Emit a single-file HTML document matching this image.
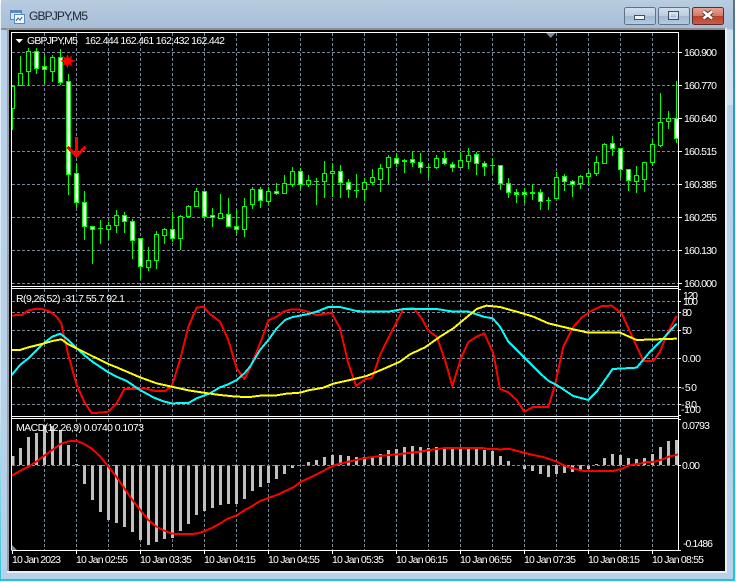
<!DOCTYPE html>
<html><head><meta charset="utf-8"><title>GBPJPY,M5</title>
<style>
html,body{margin:0;padding:0;background:#fff;width:736px;height:582px;overflow:hidden}
svg{display:block}
text{font-family:"Liberation Sans",sans-serif;font-size:10.5px;fill:#fff}
.g{stroke:#778899;stroke-width:1;stroke-dasharray:3 2;fill:none}
.c{shape-rendering:crispEdges}
.l{fill:none;stroke-width:6;stroke-linejoin:round;stroke-linecap:round;shape-rendering:crispEdges}
</style></head><body>
<svg width="736" height="582" viewBox="0 0 736 582" xmlns="http://www.w3.org/2000/svg">
<defs>
<linearGradient id="t" x1="0" y1="0" x2="0" y2="1"><stop offset="0" stop-color="#b9cce0"/><stop offset="1" stop-color="#a5bdd7"/></linearGradient>
<linearGradient id="b" x1="0" y1="0" x2="0" y2="1"><stop offset="0" stop-color="#d3e0ec"/><stop offset=".5" stop-color="#b9cde0"/><stop offset=".5" stop-color="#a1b8d1"/><stop offset="1" stop-color="#b6cce2"/></linearGradient>
<linearGradient id="r" x1="0" y1="0" x2="0" y2="1"><stop offset="0" stop-color="#e5a698"/><stop offset=".5" stop-color="#cf7a68"/><stop offset=".5" stop-color="#b8402c"/><stop offset="1" stop-color="#c8604c"/></linearGradient>
<linearGradient id="e" x1="0" y1="0" x2="0" y2="1"><stop offset="0" stop-color="#5c6f80"/><stop offset=".2" stop-color="#2a9fb4"/><stop offset="1" stop-color="#1fc4dc"/></linearGradient>
<linearGradient id="le" x1="0" y1="0" x2="0" y2="1"><stop offset="0" stop-color="#e8f0f8"/><stop offset=".7" stop-color="#cfe4f0"/><stop offset="1" stop-color="#30c4da"/></linearGradient>
<clipPath id="cp"><rect x="12" y="33" width="666" height="517"/></clipPath>
</defs>
<!-- frame -->
<rect x="0" y="0" width="736" height="582" fill="#fff"/>
<rect x="1" y="0" width="732" height="579" fill="#b7d1eb" class="c"/>
<rect x="1" y="0" width="732" height="29" fill="url(#t)" class="c"/>
<rect x="0" y="3" width="1" height="577" fill="url(#le)" class="c"/>
<rect x="733" y="0" width="2" height="581" fill="url(#e)" class="c"/>
<rect x="0" y="579" width="735" height="2" fill="#1fc4dc" class="c"/>
<rect x="727" y="30" width="6" height="75" fill="#cfe0f0" class="c"/>
<rect x="1" y="28" width="724" height="2" fill="#8c8c8c" class="c"/>
<rect x="7" y="28" width="2" height="545" fill="#9aa0a6" class="c"/>
<rect x="725" y="28" width="2" height="545" fill="#e8f0f8" class="c"/>
<rect x="7" y="571" width="720" height="2" fill="#e8f0f8" class="c"/>
<rect x="9" y="30" width="716" height="541" fill="#000" class="c"/>
<!-- title -->
<g class="c">
<rect x="10.5" y="10.5" width="11" height="9" fill="#dbe8f6" stroke="#5b87c0"/>
<rect x="14.5" y="14.5" width="10" height="9" fill="#f4f8fc" stroke="#5b87c0"/>
<rect x="11" y="11" width="10" height="2" fill="#5b87c0"/>
<path d="M16 21l2-3 2 2 2-3" stroke="#3c6fb4" fill="none"/>
</g>
<text x="29" y="20" style="font-size:12px;fill:#1c2430" textLength="59">GBPJPY,M5</text>
<rect x="624.5" y="7.5" width="31" height="17" rx="2" fill="url(#b)" stroke="#5f7288"/>
<rect x="658.5" y="7.5" width="31" height="17" rx="2" fill="url(#b)" stroke="#5f7288"/>
<rect x="692.5" y="7.5" width="31" height="17" rx="2" fill="url(#r)" stroke="#5e2a2a"/>
<rect x="634.5" y="15.5" width="10" height="4" fill="#f0f4f8" stroke="#44505e" class="c"/>
<rect x="668.5" y="11.5" width="10" height="8" fill="none" stroke="#44505e" stroke-width="1" class="c"/>
<rect x="670" y="13" width="7" height="5" fill="none" stroke="#f0f4f8" stroke-width="1" class="c"/>
<path d="M703.5 11.5l8.5 7M712 11.5l-8.5 7" stroke="#5e3030" stroke-width="4.4" fill="none"/>
<path d="M703.5 11.5l8.5 7M712 11.5l-8.5 7" stroke="#fff" stroke-width="2.6" fill="none"/>
<!-- grid -->
<g class="c">
<path class="g" d="M44.5 33V286M76.5 33V286M108.5 33V286M140.5 33V286M172.5 33V286M204.5 33V286M236.5 33V286M268.5 33V286M300.5 33V286M332.5 33V286M364.5 33V286M396.5 33V286M428.5 33V286M460.5 33V286M492.5 33V286M524.5 33V286M556.5 33V286M588.5 33V286M620.5 33V286M652.5 33V286"/>
<path class="g" d="M12 52.5H678M12 85.5H678M12 118.5H678M12 151.5H678M12 184.5H678M12 217.5H678M12 250.5H678M12 283.5H678"/>
<path class="g" d="M44.5 289V416M76.5 289V416M108.5 289V416M140.5 289V416M172.5 289V416M204.5 289V416M236.5 289V416M268.5 289V416M300.5 289V416M332.5 289V416M364.5 289V416M396.5 289V416M428.5 289V416M460.5 289V416M492.5 289V416M524.5 289V416M556.5 289V416M588.5 289V416M620.5 289V416M652.5 289V416"/>
<path class="g" d="M12 301.5H678M12 312.5H678M12 330.5H678M12 358.5H678M12 387.5H678M12 404.5H678"/>
<path class="g" d="M44.5 419V550M76.5 419V550M108.5 419V550M140.5 419V550M172.5 419V550M204.5 419V550M236.5 419V550M268.5 419V550M300.5 419V550M332.5 419V550M364.5 419V550M396.5 419V550M428.5 419V550M460.5 419V550M492.5 419V550M524.5 419V550M556.5 419V550M588.5 419V550M620.5 419V550M652.5 419V550"/>
<path class="g" d="M12 465.5H678"/>
</g>
<g clip-path="url(#cp)">
<!-- candles -->
<g class="c">
<path fill="none" stroke="#0f0" d="M12.5 86V130M20.5 56V86M28.5 48V86M36.5 48V74M44.5 55V84M52.5 55V82M60.5 49V85M68.5 74V195M76.5 163V208M84.5 191V240M92.5 226V264M100.5 220V244M108.5 222V239M116.5 210V233M124.5 212V233M132.5 219V259M140.5 238V280M148.5 247V271M156.5 231V269M164.5 228V244M172.5 212V242M180.5 215V250M188.5 205V218M196.5 188V207M204.5 191V216M212.5 208V227M220.5 194V218M228.5 198V227M236.5 210V234M244.5 198V237M252.5 187V209M260.5 187V208M268.5 187V205M276.5 183V195M284.5 175V193M292.5 167V187M300.5 168V190M308.5 175V187M316.5 178V205M324.5 161V198M332.5 163V197M340.5 165V198M348.5 179V198M356.5 174V198M364.5 178V201M372.5 169V185M380.5 164V192M388.5 155V184M396.5 153V167M404.5 159V173M412.5 151V167M420.5 153V173M428.5 163V178M436.5 155V169M444.5 151V165M452.5 162V172M460.5 152V167M468.5 148V169M476.5 152V175M484.5 161V176M492.5 158V173M500.5 165V190M508.5 178V198M516.5 189V203M524.5 188V203M532.5 184V200M540.5 189V210M548.5 197V210M556.5 172V199M564.5 174V191M572.5 180V197M580.5 175V189M588.5 170V186M596.5 156V176M604.5 143V164M612.5 136V156M620.5 148V178M628.5 169V191M636.5 166V193M644.5 162V192M652.5 140V166M660.5 93V147M668.5 111V129M676.5 81V143"/>
<path fill="none" stroke="#0f0" d="M98 228.5H103M314 181.5H319M354 190.5H359M402 160.5H407M426 167.5H431M490 165.5H495M530 192.5H535M546 200.5H551"/>
<path fill="#000" stroke="#0f0" d="M10.5 86.5h4v22h-4zM18.5 73.5h4v12h-4zM26.5 51.5h4v20h-4zM50.5 57.5h4v14h-4zM106.5 225.5h4v4h-4zM114.5 215.5h4v10h-4zM146.5 260.5h4v7h-4zM154.5 234.5h4v26h-4zM162.5 229.5h4v6h-4zM178.5 216.5h4v22h-4zM186.5 206.5h4v10h-4zM194.5 191.5h4v15h-4zM218.5 213.5h4v5h-4zM242.5 206.5h4v23h-4zM250.5 189.5h4v15h-4zM266.5 191.5h4v10h-4zM282.5 183.5h4v10h-4zM290.5 171.5h4v13h-4zM306.5 180.5h4v4h-4zM322.5 173.5h4v8h-4zM330.5 171.5h4v2h-4zM362.5 182.5h4v7h-4zM370.5 177.5h4v5h-4zM378.5 168.5h4v11h-4zM386.5 157.5h4v10h-4zM434.5 158.5h4v9h-4zM458.5 160.5h4v7h-4zM466.5 155.5h4v6h-4zM554.5 177.5h4v21h-4zM578.5 176.5h4v7h-4zM586.5 173.5h4v3h-4zM594.5 162.5h4v11h-4zM602.5 144.5h4v19h-4zM634.5 175.5h4v6h-4zM642.5 162.5h4v17h-4zM650.5 144.5h4v18h-4zM658.5 122.5h4v23h-4zM666.5 118.5h4v3h-4z"/>
<path fill="#fff" stroke="#0f0" d="M34.5 51.5h4v17h-4zM42.5 66.5h4v3h-4zM58.5 57.5h4v25h-4zM66.5 81.5h4v93h-4zM74.5 173.5h4v29h-4zM82.5 202.5h4v24h-4zM90.5 226.5h4v3h-4zM122.5 215.5h4v6h-4zM130.5 221.5h4v19h-4zM138.5 238.5h4v28h-4zM170.5 229.5h4v9h-4zM202.5 191.5h4v25h-4zM210.5 215.5h4v2h-4zM226.5 214.5h4v12h-4zM234.5 226.5h4v3h-4zM258.5 189.5h4v11h-4zM274.5 191.5h4v2h-4zM298.5 171.5h4v13h-4zM338.5 171.5h4v11h-4zM346.5 182.5h4v7h-4zM394.5 158.5h4v5h-4zM410.5 159.5h4v3h-4zM418.5 162.5h4v5h-4zM442.5 158.5h4v5h-4zM450.5 164.5h4v3h-4zM474.5 154.5h4v9h-4zM482.5 163.5h4v3h-4zM498.5 165.5h4v18h-4zM506.5 183.5h4v9h-4zM514.5 192.5h4v2h-4zM522.5 192.5h4v2h-4zM538.5 192.5h4v9h-4zM562.5 176.5h4v5h-4zM570.5 181.5h4v3h-4zM610.5 143.5h4v5h-4zM618.5 148.5h4v21h-4zM626.5 169.5h4v11h-4zM674.5 118.5h4v20h-4z"/>
<path fill="none" stroke="#0f0" d="M402 161.5H407M530 193.5H535"/>
</g>
<!-- star & arrow -->
<path fill="#f00" d="M67.5 54l1.5 4 3.5-2.500-1.500 4 4.500 1.500-4.500 1.500 1.500 4-3.500-2.500-1.500 4.500-1.500-4.500-3.500 2.500 1.500-4-4.500-1.500 4.500-1.500-1.500-4 3.500 2.500z" class="c"/>
<path d="M76.500 137V156M67.500 147L76.500 156L85.500 147" stroke="#f00" stroke-width="3" fill="none" class="c"/>
<!-- oscillator -->
<g transform="translate(0,285) scale(.33333)">
<polyline class="l" stroke="#f00" points="37,91 66,90 85,76 110,71 130,73 150,80 170,95 184,115 190,145 205,210 230,300 255,355 275,384 300,383 325,380 350,355 373,312 440,311 465,318 495,318 515,305 540,225 565,125 590,68 610,65 630,87 660,110 685,165 710,250 733,282 750,250 765,213 788,155 805,106 830,95 850,80 870,74 900,74 925,80 950,90 975,86 995,84 1020,130 1045,235 1068,303 1095,283 1117,278 1140,210 1180,130 1210,72 1240,69 1265,100 1285,137 1310,155 1335,225 1357,303 1382,222 1405,171 1430,155 1453,145 1480,205 1500,312 1525,322 1550,345 1573,380 1600,366 1645,366 1665,300 1690,185 1720,125 1745,98 1770,80 1805,63 1835,62 1865,85 1890,140 1930,228 1960,228 1980,200 2000,150 2028,95"/>
<polyline class="l" stroke="#0ff" points="37,268 60,240 85,220 110,195 133,173 157,155 181,146 205,165 230,190 255,212 280,232 325,262 350,275 380,288 420,315 460,337 490,349 515,355 565,354 590,340 630,325 660,307 685,298 710,285 733,265 750,245 780,195 805,165 830,130 855,105 875,97 900,92 925,87 950,80 985,66 1020,66 1070,78 1095,80 1165,80 1210,72 1310,72 1360,80 1405,80 1450,95 1478,100 1500,125 1525,170 1570,215 1620,265 1645,287 1670,300 1720,333 1765,345 1790,320 1838,252 1910,248 1950,200 1990,160 2028,118"/>
<polyline class="l" stroke="#ff0" points="37,195 60,195 85,187 133,175 157,168 184,163 205,178 230,190 280,215 325,237 350,247 420,277 470,295 515,305 565,316 610,323 660,330 710,335 750,336 780,332 830,331 860,326 900,323 925,316 970,308 1000,296 1050,285 1100,273 1150,252 1200,230 1230,208 1275,187 1320,155 1360,130 1390,105 1430,72 1460,62 1500,66 1550,80 1600,95 1645,115 1720,133 1765,143 1860,143 1910,165 2028,161"/>
</g>
<!-- histogram -->
<path fill="none" stroke="#c0c0c0" stroke-width="3" class="c" d="M13 465V456M20.500 465V448M28.500 465V437M36.500 465V433M44.500 465V425M52.500 465V426M60.500 465V430M68.500 465V445M76.500 465V464M84.500 465V484M92.500 465V500M100.500 465V512M108.500 465V520M116.500 465V523M124.500 465V527M132.500 465V532M140.500 465V540M148.500 465V545M156.500 465V542M164.500 465V539M172.500 465V538M180.500 465V531M188.500 465V524M196.500 465V515M204.500 465V511M212.500 465V508M220.500 465V505M228.500 465V504M236.500 465V504M244.500 465V499M252.500 465V491M260.500 465V487M268.500 465V483M276.500 465V479M284.500 465V474M292.500 465V468M308.500 465V462M316.500 465V460M324.500 465V457M332.500 465V455M340.500 465V455M348.500 465V456M356.500 465V457M364.500 465V457M372.500 465V456M380.500 465V454M388.500 465V450M396.500 465V449M404.500 465V447M412.500 465V446M420.500 465V447M428.500 465V448M436.500 465V447M444.500 465V447M452.500 465V447M460.500 465V448M468.500 465V448M476.500 465V449M484.500 465V450M492.500 465V451M500.500 465V456M508.500 465V461M524.500 465V469M532.500 465V471M540.500 465V474M548.500 465V477M556.500 465V474M564.500 465V473M572.500 465V472M580.500 465V470M588.500 465V469M596.500 465V464M604.500 465V458M612.500 465V454M620.500 465V455M628.500 465V458M636.500 465V459M644.500 465V458M652.500 465V454M660.500 465V447M668.500 465V441M676.500 465V440"/>
<path fill="none" stroke="#778899" stroke-dasharray="3 2" d="M12 465.500H678" class="c"/>
<g transform="translate(0,415) scale(.33333)">
<polyline class="l" stroke="#f00" points="37,181 60,168 85,155 109,140 133,122 157,105 181,87 205,79 229,77 253,87 277,102 301,125 325,155 349,185 373,220 397,255 421,285 445,315 469,335 493,347 517,356 541,357 565,357 589,356 613,349 637,338 661,325 685,310 709,302 733,286 750,277 780,258 805,249 835,238 880,217 900,202 950,178 1000,152 1020,146 1090,130 1140,123 1190,118 1260,110 1290,105 1335,99 1450,99 1455,101 1500,103 1530,102 1560,110 1600,120 1630,126 1670,140 1700,155 1750,168 1840,168 1870,160 1890,150 1915,147 1940,141 1965,140 1990,132 2010,124 2035,118 2060,113"/>
</g>
</g>
<!-- panel borders -->
<g class="c" fill="none" stroke="#fff">
<path d="M11.500 550V32.500H678.500V550"/>
<path d="M11.500 286.500H678.500M11.500 288.500H678.500M11.500 416.500H678.500M11.500 418.500H678.500M11.500 550.500H681"/>
<path d="M678 52.500H682M678 85.500H682M678 118.500H682M678 151.500H682M678 184.500H682M678 217.500H682M678 250.500H682M678 283.500H682"/>
<path d="M678 289.500H681M678 301.500H681M678 312.500H681M678 330.500H681M678 358.500H681M678 387.500H681M678 404.500H681M678 415.500H681M678 419.500H681M678 465.500H681"/>
<path d="M12.500 550V554M76.500 550V554M140.500 550V554M204.500 550V554M268.500 550V554M332.500 550V554M396.500 550V554M460.500 550V554M524.500 550V554M588.500 550V554M652.500 550V554"/>
</g>
<path fill="#778899" d="M546 33h9.500l-4.750 5z"/>
<path fill="#fff" d="M15.500 39h7.500l-3.750 4z"/>
<path fill="#778899" d="M12 545v5h5z"/>
<!-- labels -->
<text x="27" y="44" textLength="51">GBPJPY,M5</text>
<text x="85" y="44" textLength="140">162.444 162.461 162.432 162.442</text>
<text x="16" y="302" textLength="109">R(9,26,52) -31.7 55.7 92.1</text>
<text x="16" y="431" textLength="128">MACD(12,26,9) 0.0740 0.1073</text>
<text x="684" y="56" textLength="33">160.900</text>
<text x="684" y="89" textLength="33">160.770</text>
<text x="684" y="122" textLength="33">160.640</text>
<text x="684" y="155" textLength="33">160.515</text>
<text x="684" y="188" textLength="33">160.385</text>
<text x="684" y="221" textLength="33">160.255</text>
<text x="684" y="254" textLength="33">160.130</text>
<text x="684" y="287" textLength="33">160.000</text>
<text x="683" y="299" textLength="15">120</text>
<text x="683" y="305" textLength="15">100</text>
<text x="682" y="316" textLength="10">80</text>
<text x="682" y="334" textLength="10">50</text>
<text x="682" y="362" textLength="19">0.00</text>
<text x="681" y="391" textLength="16">-50</text>
<text x="681" y="408" textLength="16">-80</text>
<text x="681" y="413" textLength="20">-100</text>
<text x="682" y="429" textLength="28">0.0793</text>
<text x="682" y="469" textLength="18">0.00</text>
<text x="683" y="547" textLength="30">-0.1486</text>
<text x="12" y="563" textLength="49">10 Jan 2023</text>
<text x="76" y="563" textLength="52">10 Jan 02:55</text>
<text x="140" y="563" textLength="52">10 Jan 03:35</text>
<text x="204" y="563" textLength="52">10 Jan 04:15</text>
<text x="268" y="563" textLength="52">10 Jan 04:55</text>
<text x="332" y="563" textLength="52">10 Jan 05:35</text>
<text x="396" y="563" textLength="52">10 Jan 06:15</text>
<text x="460" y="563" textLength="52">10 Jan 06:55</text>
<text x="524" y="563" textLength="52">10 Jan 07:35</text>
<text x="588" y="563" textLength="52">10 Jan 08:15</text>
<text x="652" y="563" textLength="52">10 Jan 08:55</text>
</svg>
</body></html>
